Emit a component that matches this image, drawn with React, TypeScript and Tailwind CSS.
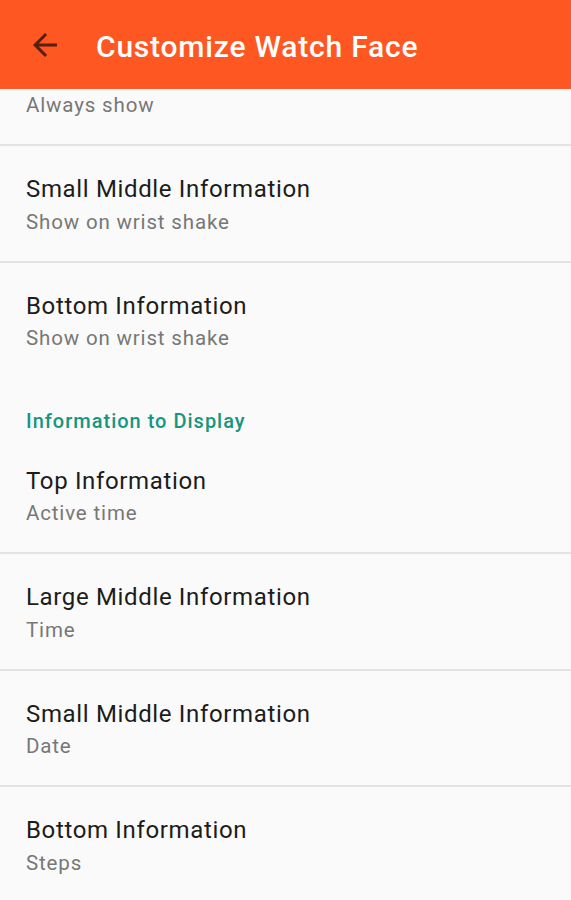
import React from "react";

type Item = { title: string; sub: string; divider: boolean };

function Sub({ children }: { children: React.ReactNode }) {
  return <div className="text-[20.5px] leading-[24px] tracking-[0.85px] text-[#777777]">{children}</div>;
}

function Row({ title, sub, divider }: Item) {
  return (
    <div
      className={
        "box-border h-[116.5px] shrink-0 pl-[26px] pt-[29px] " +
        (divider ? "border-b-2 border-[#e3e3e3]" : "")
      }
    >
      <div className="mb-[6.5px] text-[24px] leading-[28px] tracking-[0.65px] text-[#1c1c1c]">{title}</div>
      <Sub>{sub}</Sub>
    </div>
  );
}

export default function App() {
  const first: Item[] = [
    { title: "Small Middle Information", sub: "Show on wrist shake", divider: true },
    { title: "Bottom Information", sub: "Show on wrist shake", divider: false },
  ];
  const second: Item[] = [
    { title: "Top Information", sub: "Active time", divider: true },
    { title: "Large Middle Information", sub: "Time", divider: true },
    { title: "Small Middle Information", sub: "Date", divider: true },
    { title: "Bottom Information", sub: "Steps", divider: false },
  ];
  return (
    <div
      className="flex h-[900px] w-[571px] flex-col overflow-hidden bg-[#fafafa]"
      style={{ fontFamily: "Roboto, 'Noto Sans', sans-serif" }}
    >
      <header className="flex h-[89px] shrink-0 items-center bg-[#ff5722]">
        <div className="ml-[27px] flex h-[36px] w-[36px] items-center justify-center">
          <svg width="36" height="36" viewBox="0 0 24 24" fill="#5a1f0c">
            <path d="M20 11H7.83l5.59-5.59L12 4l-8 8 8 8 1.41-1.41L7.83 13H20v-2z" />
          </svg>
        </div>
        <h1 className="ml-[33px] mt-[4px] text-[30px] font-medium leading-none tracking-[0.8px] text-white">
          Customize Watch Face
        </h1>
      </header>
      <div className="flex flex-col">
        <div className="box-border h-[57px] shrink-0 border-b-2 border-[#e3e3e3] pl-[26px] pt-[4px]">
          <Sub>Always show</Sub>
        </div>
        {first.map((it, i) => (
          <Row key={"a" + i} {...it} />
        ))}
        <div className="box-border h-[58.5px] shrink-0 pl-[26px] pt-[32px] text-[20px] font-medium leading-[20px] tracking-[1px] text-[#17957f]">
          Information to Display
        </div>
        {second.map((it, i) => (
          <Row key={"b" + i} {...it} />
        ))}
      </div>
    </div>
  );
}
